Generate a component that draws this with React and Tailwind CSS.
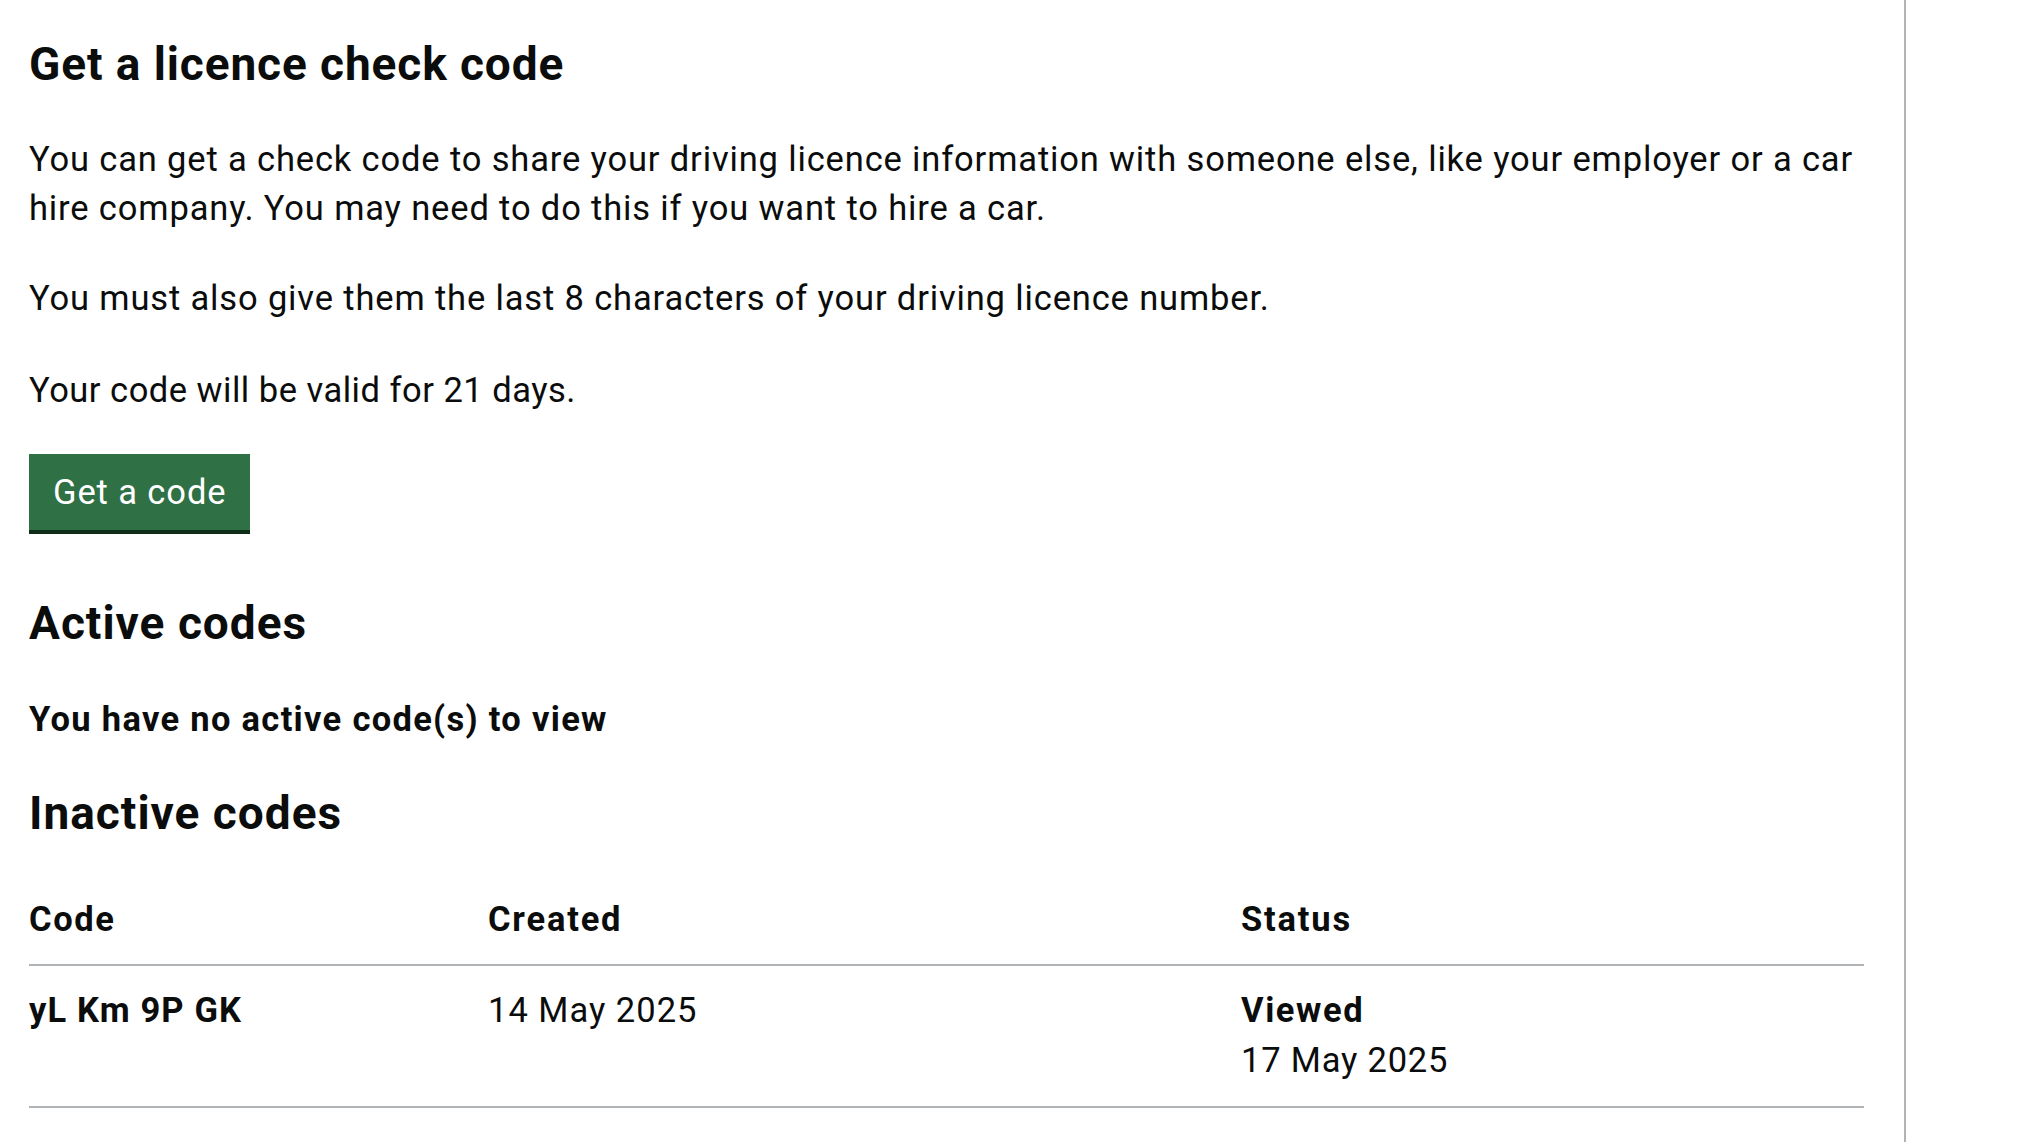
import React from 'react';

const codes = [
  { code: 'yL Km 9P GK', created: '14 May 2025', status: 'Viewed', statusDate: '17 May 2025' },
];

const App = () => {
  return (
    <div className="min-h-[1142px] bg-white text-[#0b0c0c] font-['Roboto','Liberation_Sans',sans-serif]">
      <div className="w-[1906px] min-h-[1142px] border-r-2 border-[#b1b4b6] pl-[29px] pr-[40px] pt-[38px]">
        <h1 className="text-[46px] leading-[52px] font-bold tracking-[0.9px] mb-[45px]">Get a licence check code</h1>

        <p className="text-[34.5px] leading-[49px] tracking-[0.85px] mb-[42px]">
          You can get a check code to share your driving licence information with someone else, like your employer or a car hire company. You may need to do this if you want to hire a car.
        </p>
        <p className="text-[34.5px] leading-[47px] tracking-[0.85px] mb-[45px]">
          You must also give them the last 8 characters of your driving licence number.
        </p>
        <p className="text-[34.5px] leading-[47px] tracking-[0.5px] mb-[40px]">Your code will be valid for 21 days.</p>

        <button className="h-[76px] px-[24px] bg-[#2f7044] text-white text-[34.5px] leading-[47px] tracking-[0.9px] shadow-[0_4px_0_#0f2d19] flex items-center mb-[67px]">
          Get a code
        </button>

        <h2 className="text-[46px] leading-[52px] font-bold tracking-[1px] mb-[47px]">Active codes</h2>
        <p className="text-[34.5px] leading-[47px] font-bold tracking-[1.3px] mb-[44px]">You have no active code(s) to view</p>

        <h2 className="text-[46px] leading-[52px] font-bold tracking-[1px] mb-[57px]">Inactive codes</h2>

        <table className="w-[1835px] border-collapse text-left text-[34.5px] leading-[47px]">
          <thead>
            <tr className="border-b-2 border-[#b1b4b6]">
              <th className="w-[459px] pb-[21px] font-bold tracking-[1.6px]">Code</th>
              <th className="w-[753px] pb-[21px] font-bold tracking-[1.8px]">Created</th>
              <th className="pb-[21px] font-bold tracking-[1.8px]">Status</th>
            </tr>
          </thead>
          <tbody>
            {codes.map((c) => (
              <tr key={c.code} className="border-b-2 border-[#b1b4b6] align-top">
                <td className="pt-[21px] pb-[22px] font-bold tracking-[1.1px]">{c.code}</td>
                <td className="pt-[21px] pb-[22px] tracking-[1px]">{c.created}</td>
                <td className="pt-[21px] pb-[22px]">
                  <div className="font-bold tracking-[1.6px]">{c.status}</div>
                  <div className="mt-[3px] tracking-[0.8px]">{c.statusDate}</div>
                </td>
              </tr>
            ))}
          </tbody>
        </table>
      </div>
    </div>
  );
};

export default App;
